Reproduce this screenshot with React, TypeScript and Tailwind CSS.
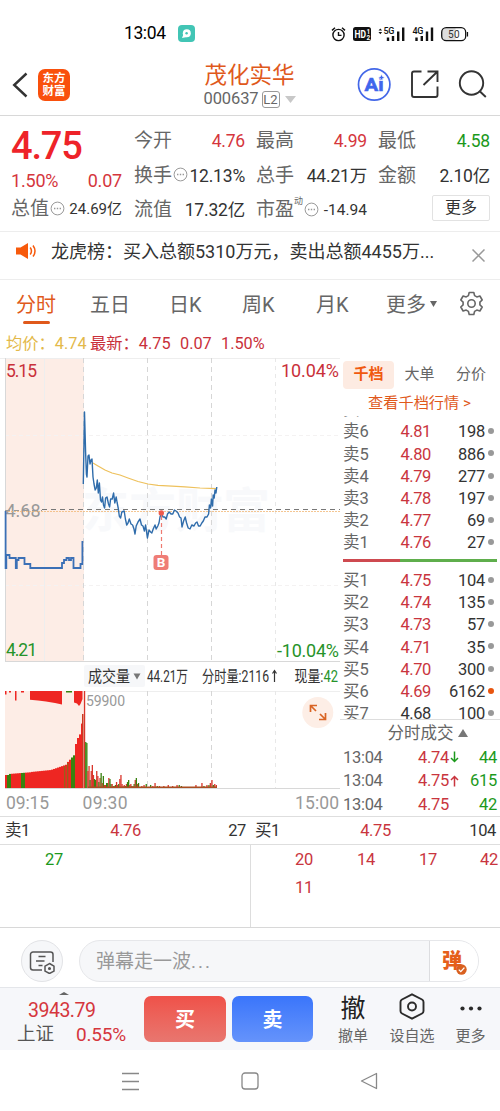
import clsx from "clsx";
import type { ReactNode } from "react";

const ASKS = [
    ["卖7", "4.82", "301"],
    ["卖6", "4.81", "198"],
    ["卖5", "4.80", "886"],
    ["卖4", "4.79", "277"],
    ["卖3", "4.78", "197"],
    ["卖2", "4.77", "69"],
    ["卖1", "4.76", "27"],
];

const BIDS = [
    ["买1", "4.75", "104"],
    ["买2", "4.74", "135"],
    ["买3", "4.73", "57"],
    ["买4", "4.71", "35"],
    ["买5", "4.70", "300"],
    ["买6", "4.69", "6162"],
    ["买7", "4.68", "100"],
];

const PRICE_LINE =
    "83.3,484 84.5,412 85.6,452 86.4,474 87,477 88,456 89,455 90,464 91,460 92,459 93,477 94,484 95.2,490 96.3,488 97.3,480 98.3,493 99.4,483 100.5,500 101.5,502 102.5,497 103.5,505 104.6,508 105.6,498 107,497 108.5,504 109.6,507 110.6,499 112.2,499 113.6,493 114.8,503 116.2,497 117.2,503 118.2,508 119.3,516 120.6,518 121.8,512 124.2,511 125.4,519 126.7,525 128,523 129.3,519 131,524 132.6,525 134,529 135,534 136.2,526 138,522 140,519 141.5,525 143,526 144.4,531 145.6,525 147.4,538 149,530 150.6,532 151.8,533 153.2,529 155,525 156.2,529 157.8,526 159,523 160,517 161.5,513 163,517 164.7,517 166.2,519 167.5,514 169.2,512 171,514 172.8,514 174.4,510 176,511 178,513 179.6,517 181,518 182,527 183.6,521 185.2,517 186.6,523 188.2,528 190,529 191.8,525 194,526 195.6,523 197,522 198.5,526 200.2,526 201.8,523 203.3,521 205,517 207,517 208.6,514 209.4,505 210.6,508 211.4,499 212.6,506 213.2,495 214.2,498 215,490 216,493 216.8,487";

const AUCTION_LINE =
    "5.6,511 5.6,568 6.3,568 6.3,555 9.5,555 9.5,558 15.8,558 15.8,568 16.8,568 16.8,560 18.5,560 18.5,558 24.5,558 24.5,564 30.3,564 30.3,568 62,568 62,563 64,563 64,560 66.5,560 66.5,558 69,558 69,560 71,560 71,558 73.5,558 73.5,568 80.5,568 80.5,564 82.4,564 82.4,541";

const AVERAGE_LINE =
    "93,463 98,466 105,470 112,473 120,475 128,478 138,481.5 148,484 158,485.3 172,486.2 185,486.8 200,488 216,488.7";

// [x, height, up/down] of each minute after the open
const VOLUME: [number, number, "r" | "g"][] = [
    [84.6, 97, "r"], [85.8, 46, "g"], [86.9, 45, "g"], [88, 17, "r"], [89.1, 22, "r"],
    [90.2, 8, "g"], [91.3, 17, "r"], [92.4, 23, "r"], [93.5, 13, "r"], [94.6, 9, "g"],
    [95.7, 8, "g"], [96.8, 17, "r"], [97.9, 12, "r"], [99, 6, "g"], [100.1, 10, "r"],
    [101.2, 15, "g"], [102.3, 5, "r"], [103.4, 12, "g"], [104.5, 3, "r"], [105.6, 3, "r"],
    [106.7, 5, "g"], [107.8, 5, "g"], [108.9, 10, "r"], [110, 9, "g"], [111.1, 4, "g"],
    [112.2, 4, "r"], [113.3, 2, "g"], [114.4, 2, "r"], [115.5, 3, "g"], [116.6, 6, "r"],
    [117.7, 3, "r"], [118.8, 4, "g"], [119.9, 9, "r"], [121, 13, "r"], [122.1, 4, "r"],
    [123.2, 2, "r"], [124.3, 3, "r"], [125.4, 2, "g"], [126.5, 4, "r"], [127.6, 6, "g"],
    [128.7, 8, "g"], [129.8, 3, "r"], [130.9, 4, "r"], [132, 2, "g"], [133.1, 2, "r"],
    [134.2, 4, "g"], [135.3, 8, "r"], [136.4, 10, "g"], [137.5, 4, "r"], [138.6, 5, "g"],
    [139.7, 1, "r"], [141.9, 2, "r"], [144.1, 3, "r"], [146.3, 4, "g"], [148.5, 1, "r"],
    [150.7, 3, "g"], [152.9, 2, "r"], [155.1, 5, "r"], [157.3, 2, "g"], [159.5, 2, "r"],
    [161.7, 1, "g"], [163.9, 2, "r"], [166.1, 1, "g"], [168.3, 3, "r"], [170.5, 1, "g"],
    [172.7, 2, "r"], [174.9, 1, "g"], [177.1, 3, "r"], [179.3, 3, "g"], [181.5, 2, "g"],
    [183.7, 1, "r"], [187, 1, "g"], [191, 1, "r"], [196, 3, "r"], [198, 1, "g"],
    [202, 5, "r"], [204, 2, "g"], [207, 3, "r"], [209, 3, "g"], [210.4, 5, "r"],
    [212, 8, "r"], [213.4, 3, "g"], [214.8, 4, "r"], [216.4, 3, "r"],
];

function More() {
    return (
        <svg className="mx-px mb-[2px] size-[15px] shrink-0" viewBox="0 0 15 15" fill="none" stroke="#999">
            <circle cx="7.5" cy="7.5" r="6.4" />
            <path d="M4 7.5h1.4M6.8 7.5h1.4M9.6 7.5H11" strokeWidth="1.3" />
        </svg>
    );
}

function Stat({ label, value, color = "text-[#333]" }: { label: ReactNode; value: string; color?: string }) {
    return (
        <div className="flex h-[34.5px] items-center justify-between whitespace-nowrap">
            <span className="flex items-center text-[19px] text-[#666]">{label}</span>
            <span className={clsx("tracking-[-0.2px]", color)}>{value}</span>
        </div>
    );
}

function StatusBar() {
    return (
        <div className="flex h-[60px] items-center pt-[7px] pl-[124px]">
            <span className="w-[54px] text-[17.5px] tracking-[-0.4px] text-black">13:04</span>
            <svg className="size-[17px]" viewBox="0 0 17 17">
                <rect width="17" height="17" rx="4" fill="#42c5b5" />
                <circle cx="8.8" cy="8.2" r="4" fill="#fff" />
                <path d="M4 13l2-5 3 4z" fill="#fff" />
                <circle cx="8.6" cy="8.3" r="1.2" fill="#42c5b5" />
            </svg>
            <svg className="ml-[136px] h-[18px] w-[140px]" viewBox="331 24 140 18" fill="none" stroke="#111">
                <g strokeWidth="1.4">
                    <circle cx="338.5" cy="34" r="5.6" />
                    <path d="M338.5 31v3.4h3M332 29.4l3-2.6M345 29.4l-3-2.6" />
                </g>
                <rect x="353" y="26" width="18" height="14" rx="2.5" fill="#111" stroke="none" />
                <text x="354.5" y="37" fill="#fff" stroke="none" fontSize="10" fontWeight="700" textLength="11.5" lengthAdjust="spacingAndGlyphs">HD</text>
                <text x="366.5" y="32.5" fill="#fff" stroke="none" fontSize="6.5" fontWeight="700">1</text>
                <text x="366.5" y="39" fill="#fff" stroke="none" fontSize="6.5" fontWeight="700">2</text>
                <path d="M378.5 29.6l1.8-2.2 1.8 2.2zM378.5 31l1.8 2.2 1.8-2.2z" fill="#111" stroke="none" />
                <text x="383.5" y="33" fill="#111" stroke="none" fontSize="9" fontWeight="500" textLength="11">5G</text>
                <text x="412.5" y="33" fill="#111" stroke="none" fontSize="9" fontWeight="500" textLength="11">4G</text>
                <path
                    d="M388 40v-3.5M393 40v-5M398.2 40v-9.5M403.2 40V26.5M416.5 40v-3.5M421.8 40v-5M427 40v-9.5M432 40V26.5"
                    strokeWidth="2.4"
                />
                <path d="M446 27h9.5v12.5H446a4 4 0 0 1-4-4v-4.5a4 4 0 0 1 4-4z" fill="#ddd" stroke="none" />
                <rect x="441.7" y="26.7" width="24" height="13" rx="4.5" strokeWidth="1.3" />
                <path d="M467.5 31v4.5" strokeWidth="1.2" />
                <text x="448" y="37" fill="#333" stroke="none" fontSize="10" textLength="11.5">50</text>
            </svg>
        </div>
    );
}

function Header() {
    return (
        <header className="flex h-[56px] items-center border-b border-[#d8d8d8] pl-[12px]">
            <svg className="mb-[6px] h-[26px] w-[16px]" viewBox="0 0 16 26" fill="none" stroke="#333" strokeWidth="2.4">
                <path d="M14.5 1.5L2.2 13l12.3 11.5" />
            </svg>
            <div className="mb-[6px] ml-[10px] flex size-[32px] flex-col items-center justify-center rounded-[7px] bg-[#f9500c] text-[11.5px] leading-[13px] font-bold text-white">
                <span>东方</span>
                <span>财富</span>
            </div>
            <div className="ml-[129px] flex w-[101px] flex-col items-center">
                <h1 className="text-[22.5px] leading-[24px] whitespace-nowrap text-[#e0591b]">茂化实华</h1>
                <div className="flex h-[26px] items-center gap-[3px] text-[16.5px] text-[#666]">
                    <span className="tracking-[-0.1px]">000637</span>
                    <span className="flex h-[17px] w-[18px] items-center justify-center rounded-[3px] border border-[#999] text-[13px]">
                        L2
                    </span>
                    <svg className="ml-[2px] h-[7px] w-[11px]" viewBox="0 0 11 7">
                        <path d="M0 0h11L5.5 7z" fill="#c8c8c8" />
                    </svg>
                </div>
            </div>
            <svg className="mb-[7px] ml-[57px] h-[36px] w-[132px]" viewBox="357 66 132 36" fill="none">
                <circle cx="374.2" cy="84.5" r="15.7" stroke="#4468e8" strokeWidth="1.7" />
                <text x="364.5" y="91" fill="#3f66ec" stroke="#3f66ec" strokeWidth=".6" fontSize="19" fontWeight="700" textLength="19" lengthAdjust="spacingAndGlyphs">
                    Ai
                </text>
                <path d="M381.5 74l1 2.5 2.5 1-2.5 1-1 2.5-1-2.5-2.5-1 2.5-1z" fill="#3f66ec" stroke="#fff" strokeWidth=".6" />
                <g stroke="#333" strokeWidth="1.9">
                    <path d="M421.5 71.5H414a2 2 0 0 0-2 2V95a2 2 0 0 0 2 2h21.5a2 2 0 0 0 2-2v-8.5" />
                    <path d="M427.5 71.5h10V82M437 72l-13.5 13" />
                    <circle cx="471.5" cy="83" r="11.7" />
                    <path d="M480 91.5l5.8 5.5" />
                </g>
            </svg>
        </header>
    );
}

function Quote() {
    return (
        <section className="flex h-[116px] gap-[12px] border-b border-[#ededed] pt-[8px] pl-[11px] text-[17.5px]">
            <div className="w-[111px]">
                <p className="h-[45px] text-[38px] leading-[44px] font-medium tracking-[-1.2px] text-[#ee2329]">4.75</p>
                <p className="flex h-[23px] items-center justify-between text-[18px] tracking-[-0.2px] text-[#d5363d]">
                    <span>1.50%</span>
                    <span>0.07</span>
                </p>
                <div className="flex h-[34.5px] items-center justify-between whitespace-nowrap">
                    <span className="flex items-center text-[19px] text-[#666]">总值<More /></span>
                    <span className="text-[15px] text-[#333]">24.69亿</span>
                </div>
            </div>
            <div className="w-[111px]">
                <Stat label="今开" value="4.76" color="text-[#d5363d]" />
                <Stat label={<>换手<More /></>} value="12.13%" />
                <Stat label="流值" value="17.32亿" />
            </div>
            <div className="-ml-px w-[111px]">
                <Stat label="最高" value="4.99" color="text-[#d5363d]" />
                <Stat label="总手" value="44.21万" />
                <div className="flex h-[34.5px] items-center justify-between whitespace-nowrap">
                    <span className="flex items-center text-[19px] text-[#666]">
                        市盈<sup className="-top-[9px] text-[9px]">动</sup><More />
                    </span>
                    <span className="text-[15.5px] text-[#333]">-14.94</span>
                </div>
            </div>
            <div className="-ml-px w-[112px]">
                <Stat label="最低" value="4.58" color="text-[#1c991c]" />
                <Stat label="金额" value="2.10亿" />
                <div className="mt-[2px] ml-auto flex h-[26px] w-[58px] items-center justify-center rounded-[2px] border border-[#e2e2e2] text-[16px] text-[#333]">
                    更多
                </div>
            </div>
        </section>
    );
}

function Notice() {
    return (
        <section className="flex h-[48px] items-center border-b border-[#ededed] pl-[15px]">
            <svg className="mt-[-9px] h-[18px] w-[22px]" viewBox="0 0 22 18" fill="#f75a0c">
                <path d="M1 5.5h4.5L13 1v16l-7.5-4.5H1z" />
                <path d="M15.2 5.5q2.5 3.5 0 7M18 3.5q4 5.5 0 11" fill="none" stroke="#f75a0c" strokeWidth="1.5" />
            </svg>
            <p className="mt-[-8px] ml-[14px] w-[384px] text-[18px] whitespace-nowrap text-[#333]">
                龙虎榜：买入总额5310万元，卖出总额4455万...
            </p>
            <svg className="mt-[-1px] ml-[37px] size-[13px]" viewBox="0 0 13 13" stroke="#999" strokeWidth="1.5">
                <path d="M.5.5l12 12M12.5.5l-12 12" />
            </svg>
        </section>
    );
}

function PeriodTabs() {
    return (
        <nav className="flex h-[53px] items-start pt-[10px] pl-[16px] text-[20px] leading-[30px] whitespace-nowrap text-[#666]">
            <div className="flex w-[74px] flex-col text-[#e0591b]">
                分时
                <span className="mt-[1px] ml-[7px] h-[3px] w-[27px] rounded-full bg-[#e0591b]" />
            </div>
            <span className="w-[79px]">五日</span>
            <span className="w-[73px]">日K</span>
            <span className="w-[74px]">周K</span>
            <span className="w-[70px]">月K</span>
            <span>更多</span>
            <svg className="mt-[11px] ml-[4px] h-[6px] w-[7px]" viewBox="0 0 7 6">
                <path d="M0 0h7L3.5 6z" fill="#666" />
            </svg>
            <svg className="mt-[1px] ml-[22px] size-[25px]" viewBox="0 0 25 25" fill="none" stroke="#666" strokeWidth="1.6" strokeLinejoin="round">
                <path d="M10.2 1.5h4.6l.8 3.1 2.2 1.3 3.1-.9 2.3 4-2.3 2.2v2.6l2.3 2.2-2.3 4-3.1-.9-2.2 1.3-.8 3.1h-4.6l-.8-3.1-2.2-1.3-3.1.9-2.3-4 2.3-2.2v-2.6L1.8 9l2.3-4 3.1.9 2.2-1.3z" />
                <circle cx="12.5" cy="12.5" r="3.7" />
            </svg>
        </nav>
    );
}

function auctionHeight(x: number) {
    if (x < 8) return 13;
    if (x < 30) return 14 + (x - 8) * 0.08;
    if (x < 50) return 16 + (x - 30) * 0.1;
    if (x < 66) return 18 + (x - 50) * 0.35;
    if (x < 74) return 25 + (x - 66) * 1.1;
    if (x < 77) return 44;
    return 50 + (x - 77) * (x - 77) * 0.9;
}

function Chart() {
    const auction = Array.from({ length: 39 }, (_, i) => 5 + i * 2);
    return (
        <svg className="block h-[458px] w-[340px]" viewBox="0 358 340 458">
            <rect x="5" y="358" width="79" height="303" fill="#fdede6" />
            <rect x="5" y="691" width="79" height="97" fill="#fdede6" />
            <text x="82" y="527" textLength="188" fill="#f8f9fb" fontSize="47" fontWeight="700">东方财富</text>
            <g stroke="#eee" fill="none">
                <path d="M0 358.5h340M83 691.5h257M44.5 358v303" />
                <path d="M5 585.5h335M5 435.5h335" strokeDasharray="4 3" stroke="#f4f2f2" />
                <path d="M275.5 358v303M275.5 691v97" strokeDasharray="4 4" stroke="#e8e8e8" />
            </g>
            <path d="M147.5 358v303M211.5 358v303M147.5 691v97M211.5 691v97M83.5 358v303" stroke="#d6d6d6" strokeDasharray="5 4" />
            <path d="M5 661.5h335M5 788.5h335M5.5 358v303" stroke="#d8d8d8" />
            <text x="5.5" y="516.5" fill="#999" fontSize="18">4.68</text>
            <path d="M42 509.5h298" stroke="#777" strokeDasharray="5 4" />
            <path d="M5 510.5h37" stroke="#999" strokeDasharray="5 4" />
            <path d="M5 511.5h335" stroke="#f2b978" strokeDasharray="2 1" opacity=".8" />
            <polyline points={AVERAGE_LINE} fill="none" stroke="#eec15c" strokeWidth="1.2" />
            <polyline points={PRICE_LINE} fill="none" stroke="#2f6cab" strokeWidth="1.4" strokeLinejoin="round" />
            <polyline points={AUCTION_LINE} fill="none" stroke="#3b70b6" strokeWidth="1.8" />
            <circle cx="161.3" cy="513" r="2.7" fill="#ee5a4c" />
            <path d="M161.5 516v39" stroke="#ee7a70" strokeWidth="1.2" strokeDasharray="4 3" />
            <rect x="153.5" y="555" width="15" height="15" rx="3" fill="#ef7d76" />
            <text x="156.7" y="567.3" fill="#fff" fontSize="13.5" fontWeight="700">B</text>
            <text x="6" y="377" fill="#c9303a" fontSize="17.5" textLength="31">5.15</text>
            <text x="6" y="656" fill="#26932a" fontSize="17.5" textLength="31">4.21</text>
            <text x="281" y="377" fill="#c9303a" fontSize="18" textLength="58">10.04%</text>
            <text x="277" y="656.5" fill="#26932a" fontSize="18" textLength="62">-10.04%</text>

            <rect x="84" y="665" width="61" height="22" rx="2" fill="#f6f7f9" />
            <g fill="#333" fontSize="16">
                <text x="88" y="682" textLength="42" lengthAdjust="spacingAndGlyphs">成交量</text>
                <path d="M133.5 673.5h7l-3.5 6z" fill="#777" />
                <text x="147" y="682" textLength="41" lengthAdjust="spacingAndGlyphs">44.21万</text>
                <text x="202" y="682" textLength="67" lengthAdjust="spacingAndGlyphs">分时量:2116</text>
                <path d="M274.5 682v-11.5M272.5 673.5l2-3 2 3" fill="none" stroke="#333" strokeWidth="1.2" />
                <text x="294.5" y="682" textLength="43.5" lengthAdjust="spacingAndGlyphs">
                    现量:<tspan fill="#26932a">42</tspan>
                </text>
            </g>

            {auction.map((x) => {
                const h = Math.min(auctionHeight(x), 74);
                const green = (x >= 7 && x < 10) || (x >= 20 && x < 25) || (x >= 70 && x < 74);
                return <rect key={x} x={x} y={788 - h} width="2.1" height={h} fill={green ? "#38820f" : "#ee2622"} />;
            })}
            <g fill="#ee2622">
                <path d="M30 691h32v13.500l-7-1.500-9-1.500-8-1-8-.8z" />
                <path d="M74 691h8.500v8l-2 5-1.500 2-2-2.500-3-1z" />
                <path d="M5 691h1.500v3.500H5zM15 691h1.500v9.500H15zM9 691h2v1.500H9zM21 691h3v1.500h-3z" />
            </g>
            <path d="M66 691h6v1.500h-6z" fill="#38820f" />
            <path d="M64 766h1.300v22H64zM67 763h1.300v25H67z" fill="#98601c" />
            <rect x="82" y="714" width="1.5" height="74" fill="#c93a22" />
            {VOLUME.map(([x, h, dir]) => (
                <rect key={x} x={x - 0.7} y={788 - h} width="1.3" height={h} fill={dir === "r" ? "#d9362c" : "#38820f"} />
            ))}
            <path d="M88 787.3h129" stroke="#a94d21" strokeWidth="1.4" />
            <text x="86" y="706" fill="#999" fontSize="14" textLength="39">59900</text>
            <circle cx="317.8" cy="712.5" r="15.5" fill="#fdeee6" />
            <path d="M310.500 712v-6.500h6.500M311 706l5 5M325.500 713v6.500H319M325 719l-5-5" fill="none" stroke="#d96424" strokeWidth="1.7" />
            <g fill="#999" fontSize="17.5">
                <text x="6" y="809" textLength="43">09:15</text>
                <text x="82.5" y="809" textLength="45">09:30</text>
                <text x="295" y="809" textLength="44">15:00</text>
            </g>
        </svg>
    );
}

function BookRow({ row }: { row: string[] }) {
    const [name, price, amount] = row;
    return (
        <div className="flex h-[22.2px] items-center text-[16.5px]">
            <span className="w-[42px] text-[#666]">{name}</span>
            <span className={clsx("w-[46px] text-right tracking-[-0.4px]", price === "4.68" ? "text-[#333]" : "text-[#c9353e]")}>
                {price}
            </span>
            <span className="w-[54px] text-right tracking-[-0.3px] text-[#333]">{amount}</span>
            <span className={clsx("mb-[3px] ml-[3px] size-[6px] rounded-full", amount === "6162" ? "bg-[#e8550f]" : "bg-[#999]")} />
        </div>
    );
}

function Trade({ price, amount, arrow }: { price: string; amount: string; arrow?: "up" | "down" }) {
    return (
        <div className="flex h-[23.8px] shrink-0 items-center pt-[2px] text-[16.5px] tracking-[-0.3px]">
            <span className="w-[60px] text-[#666]">13:04</span>
            <span className="w-[46px] text-right text-[#c9353e]">{price}</span>
            <svg className="mb-px h-[13px] w-[10px]" viewBox="0 0 10 13" fill="none" strokeWidth="1.5">
                {arrow === "down" && <path d="M5.5.5v10M2 7l3.5 3.5L9 7" stroke="#1c991c" />}
                {arrow === "up" && <path d="M5.5 11.5V1.5M2 5l3.5-3.5L9 5" stroke="#c9353e" />}
            </svg>
            <span className="w-[38px] text-right text-[#1c991c]">{amount}</span>
        </div>
    );
}

function OrderBook() {
    return (
        <aside className="flex w-[160px] flex-col pl-[3px]">
            <div className="flex h-[33px] shrink-0 items-center text-[15px] text-[#666]">
                <span className="flex h-[28px] w-[51px] items-center justify-center rounded-[4px] bg-[#fdebe2] font-bold text-[#f0590f]">
                    千档
                </span>
                <span className="w-[51px] text-center">大单</span>
                <span className="w-[52px] text-center">分价</span>
            </div>
            <p className="h-[25px] shrink-0 pr-[4px] text-center text-[15.2px] leading-[24px] whitespace-nowrap text-[#e0591b]">
                查看千档行情 &gt;
            </p>
            <div className="h-[303px] shrink-0 overflow-hidden">
                <div className="mt-[-16.5px]">
                    {ASKS.map((row) => <BookRow key={row[0]} row={row} />)}
                </div>
                <div className="mt-[4.5px] mb-[8px] flex h-[3px] w-[154px]">
                    <span className="w-[57px] bg-[#ce4a50]" />
                    <span className="flex-1 bg-[#5fae4c]" />
                </div>
                {BIDS.map((row) => <BookRow key={row[0]} row={row} />)}
            </div>
            <div className="-ml-[3px] flex h-[26px] shrink-0 items-center justify-center gap-[4px] border-t border-[#ddd] pt-[3px] pr-[1px] pl-[16px] text-[16.5px] text-[#666]">
                分时成交
                <svg className="mb-[3px] h-[8px] w-[10px]" viewBox="0 0 10 8">
                    <path d="M5 0l5 8H0z" fill="#777" />
                </svg>
            </div>
            <Trade price="4.74" amount="44" arrow="down" />
            <Trade price="4.75" amount="615" arrow="up" />
            <Trade price="4.75" amount="42" />
        </aside>
    );
}

function BestPrice({ name, price, amount }: { name: string; price: string; amount: string }) {
    return (
        <div className="flex h-[29px] w-1/2 items-center justify-between border-y border-[#dedede] pt-[2px] pr-[4px] pl-[5px] text-[16.5px] tracking-[-0.4px] text-[#333]">
            <span className="w-[36px]">{name}</span>
            <span className="text-[#c9353e]">{price}</span>
            <span className="w-[36px] text-right">{amount}</span>
        </div>
    );
}

function Queue() {
    return (
        <section>
            <div className="flex">
                <BestPrice name="卖1" price="4.76" amount="27" />
                <BestPrice name="买1" price="4.75" amount="104" />
            </div>
            <div className="flex h-[83px] border-b border-[#d8d8d8] text-[16.5px] leading-[28px] tracking-[-0.3px]">
                <div className="w-[250px] pt-px pl-[45px] text-[#1c991c]">27</div>
                <div className="grid w-[250px] grid-cols-[62px_62px_62px_61px] content-start border-l border-[#ddd] pt-px text-right text-[#c9353e]">
                    <span>20</span>
                    <span>14</span>
                    <span>17</span>
                    <span>42</span>
                    <span>11</span>
                </div>
            </div>
        </section>
    );
}

function CommentBar() {
    return (
        <section className="flex h-[60px] items-center border-b border-[#e4e6ea] pt-[7px] pl-[21px]">
            <div className="flex size-[42px] items-center justify-center rounded-full border border-[#e2e3e6] bg-[#f6f7f9]">
                <svg className="mt-[1px] h-[24px] w-[27px]" viewBox="0 0 27 24" fill="none" stroke="#555" strokeWidth="1.5">
                    <path d="M13 20H4a2.500 2.500 0 0 1-2.500-2.500v-13A2.500 2.500 0 0 1 4 2h17.500A2.500 2.500 0 0 1 24 4.500V12M9.500 6.500h7M7 11h8.500M9.500 15.500h4" />
                    <path d="M20.500 13.500l4.500 2.600v5l-4.500 2.400-4.500-2.400v-5z" />
                    <circle cx="20.500" cy="18.500" r=".8" />
                </svg>
            </div>
            <div className="ml-[16px] flex h-[42px] w-[400px] items-center rounded-full border border-[#e6e7ea] bg-[#f6f7f9]">
                <span className="w-[349px] pt-[2px] pl-[16px] text-[19px] text-[#999]">
                    弹幕走一波<span className="tracking-[2px]">...</span>
                </span>
                <div className="flex h-[40px] flex-1 items-center rounded-r-full border-l border-[#dcdde0] bg-white pl-[12px]">
                    <span className="text-[20px] font-black text-[#e5601b]">弹</span>
                    <svg className="mt-[16px] ml-[-6px] size-[11px]" viewBox="0 0 11 11">
                        <circle cx="5.5" cy="5.5" r="5.2" fill="#d9601f" />
                        <path d="M2.8 5.6l2 2 3.600-4" fill="none" stroke="#fff" strokeWidth="1.3" />
                    </svg>
                </div>
            </div>
        </section>
    );
}

function TradeBar() {
    return (
        <footer className="flex h-[62px] bg-[#f6f7fa] whitespace-nowrap">
            <div className="flex w-[144px] flex-col pl-[17px]">
                <svg className="mt-[4px] ml-[42px] h-[3px] w-[10px]" viewBox="0 0 10 3">
                    <path d="M5 0l5 3H0z" fill="#666" />
                </svg>
                <span className="ml-[11px] text-[19.5px] leading-[32px] tracking-[-0.5px] text-[#d5363d]">3943.79</span>
                <div className="flex w-[109px] items-center justify-between leading-[15px]">
                    <span className="text-[18.5px] text-[#555]">上证</span>
                    <span className="text-[19px] tracking-[-0.2px] text-[#d5363d]">0.55%</span>
                </div>
            </div>
            <div className="flex gap-[6px] pt-[8px] text-[20px] font-bold text-white">
                <div className="flex h-[46px] w-[82px] items-center justify-center rounded-[7px] bg-linear-to-b from-[#ef5149] to-[#e8766f] pt-[2px]">买</div>
                <div className="flex h-[46px] w-[81px] items-center justify-center rounded-[7px] bg-linear-to-b from-[#3a75fb] to-[#6593fb] pt-[2px]">卖</div>
            </div>
            <div className="flex pl-[11px] text-center text-[15px] text-[#666]">
                <div className="w-[58px]">
                    <p className="h-[36px] pt-[3px] text-[25px] leading-[36px] text-[#222]">撤</p>
                    <p className="leading-[24px]">撤单</p>
                </div>
                <div className="w-[60px]">
                    <svg className="mx-auto mt-[5px] h-[27px] w-[26px]" viewBox="0 0 26 27" fill="none" stroke="#2b2b2b" strokeWidth="1.9">
                        <path d="M13 1.3l10 5.2q1.5.8 1.5 2.5v9q0 1.700-1.500 2.500L13 25.700 3 20.500Q1.500 19.700 1.500 18V9Q1.500 7.300 3 6.500z" />
                        <circle cx="13" cy="13.5" r="4" />
                    </svg>
                    <p className="mt-[4px] leading-[24px]">设自选</p>
                </div>
                <div className="w-[57px]">
                    <svg className="mx-auto mt-[18px] h-[5px] w-[22px]" viewBox="0 0 22 5" fill="#2b2b2b">
                        <circle cx="2.5" cy="2.5" r="2.1" />
                        <circle cx="11" cy="2.5" r="2.1" />
                        <circle cx="19.5" cy="2.5" r="2.1" />
                    </svg>
                    <p className="mt-[13px] leading-[24px]">更多</p>
                </div>
            </div>
        </footer>
    );
}

export default function App() {
    return (
        <main className="h-[1111px] w-[500px] overflow-hidden bg-white font-[Roboto,'Noto_Sans_CJK_SC',sans-serif]">
            <StatusBar />
            <Header />
            <Quote />
            <Notice />
            <PeriodTabs />
            <p className="flex h-[25px] items-center pb-[3px] pl-[6px] text-[16.3px] whitespace-nowrap text-[#c9303a]">
                <span className="w-[84px] text-[#e3b94a]">均价：4.74</span>
                <span className="w-[90px]">最新：4.75</span>
                <span className="w-[41px]">0.07</span>
                <span>1.50%</span>
            </p>
            <div className="flex h-[458px]">
                <Chart />
                <OrderBook />
            </div>
            <Queue />
            <CommentBar />
            <TradeBar />
            <div className="flex h-[61px] items-center justify-center">
                <svg className="h-[20px] w-[260px]" viewBox="120 0 260 20" fill="none" stroke="#888" strokeWidth="1.3">
                    <path d="M122 2.5h17M122 10.5h17M122 18.5h17" />
                    <rect x="242" y="2" width="16" height="16" rx="3" />
                    <path d="M376.5 2.5v15L361.5 10z" strokeLinejoin="round" />
                </svg>
            </div>
        </main>
    );
}
